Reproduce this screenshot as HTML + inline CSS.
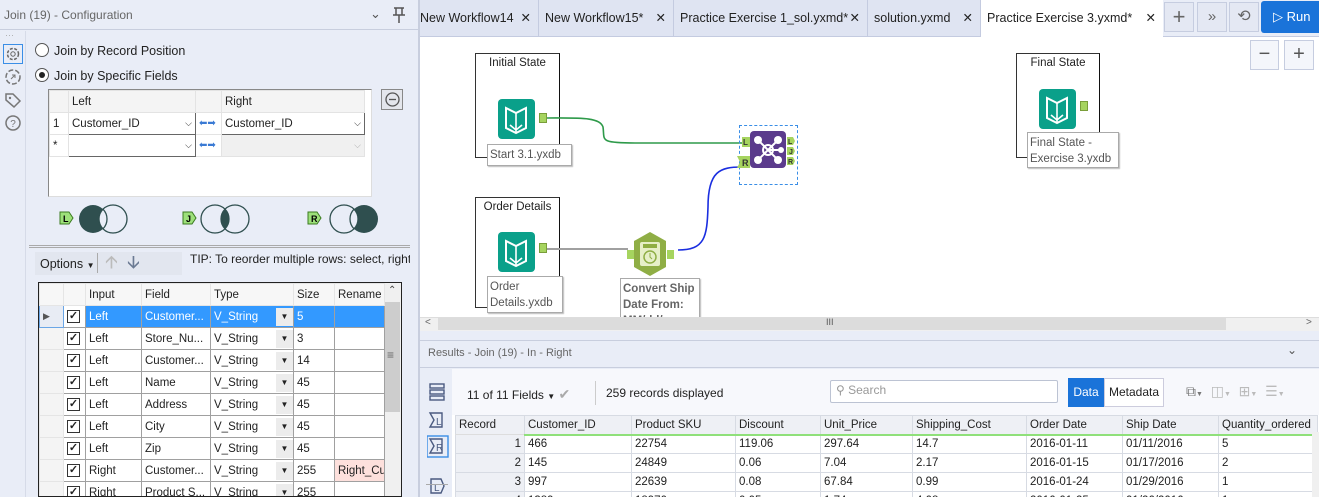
<!DOCTYPE html>
<html><head><meta charset="utf-8"><style>
*{box-sizing:border-box;margin:0;padding:0}
html{width:1319px;height:497px;overflow:hidden}
body{width:1319px;height:497px;overflow:hidden;position:relative;background:#e9edf7;font-family:"Liberation Sans",sans-serif;font-size:12px;color:#222}
.a{position:absolute}
.t{position:absolute;white-space:nowrap}
table{border-collapse:collapse;position:absolute;table-layout:fixed}
td{border:1px solid #a0a0a0;padding:0 3px;white-space:nowrap;overflow:hidden;height:22px;font-size:11.5px}
.rg td{height:19px;border:1px solid #d7dbe3;font-size:11.5px}
.ty{line-height:20px}
.dd{display:block;width:17px;height:18px;background:#ececec;float:right;text-align:center;font-size:8px;line-height:18px;margin-right:-3px;margin-top:1px}
.cb{display:inline-block;width:13px;height:13px;border:1px solid #333;background:#fff;font-size:11px;line-height:11px;text-align:center;font-weight:bold}
.tab{position:absolute;top:0;height:36px;background:#dfe4f2;border-right:1px solid #c4cbe0;font-size:12.5px;line-height:36px;padding-left:6px}
.tab b{position:absolute;right:7px;font-weight:normal}
.port{position:absolute;width:8px;height:10px;background:#a6d45f;border:1px solid #7a9e3a}
.lbl{position:absolute;border:1px solid #aaa;background:#fff;font-size:11.5px;color:#555;padding:2px;line-height:16px;box-shadow:1px 1px 1px #bbb}
.box{position:absolute;border:1px solid #333;border-right:1.5px solid #111;background:#fff;font-size:11.5px;text-align:center;padding-top:3px}
.book{position:absolute;width:37px;height:40px;background:#0aa08a;border-radius:4px}
</style></head><body>

<!-- LEFT PANEL -->
<div class="a" style="left:0;top:0;width:419px;height:30px;border-bottom:1px solid #c8cede;background:#e9edf7"></div>
<div class="t" style="left:4px;top:8px;font-size:12px;color:#666">Join (19) - Configuration</div>
<div class="t" style="left:370px;top:6px;font-size:13px;color:#555">&#8964;</div>
<svg class="a" style="left:391px;top:6px" width="16" height="18"><path d="M3 2h10M5 2v7M11 2v7M2 9h12M8 9v8" stroke="#555" stroke-width="1.5" fill="none"/></svg>
<div class="a" style="left:418px;top:0;width:2px;height:497px;background:#c8cede"></div>
<div class="a" style="left:25px;top:31px;width:1px;height:466px;background:#d6dbe8"></div>
<div class="t" style="left:5px;top:30px;color:#aaa;font-size:9px">···</div>
<div class="a" style="left:3px;top:44px;width:20px;height:20px;border:1px solid #3a8ee6"></div>
<svg class="a" style="left:4px;top:45px" width="18" height="18"><circle cx="9" cy="9" r="5.5" fill="none" stroke="#666" stroke-width="1.5" stroke-dasharray="3 1.5"/><circle cx="9" cy="9" r="2.2" fill="none" stroke="#666"/></svg>
<svg class="a" style="left:4px;top:68px" width="18" height="18"><circle cx="9" cy="9" r="7" fill="none" stroke="#777" stroke-width="1.5" stroke-dasharray="5 2"/><path d="M7 11l4-4M8 7h3v3" stroke="#777" fill="none"/></svg>
<svg class="a" style="left:4px;top:91px" width="18" height="18"><path d="M2 3v6l8 7 6-6-7-7z" fill="none" stroke="#777" stroke-width="1.5"/><circle cx="6" cy="7" r="1.2" fill="#777"/></svg>
<svg class="a" style="left:4px;top:114px" width="18" height="18"><circle cx="9" cy="9" r="7" fill="none" stroke="#777" stroke-width="1.5"/><text x="9" y="13" font-size="10" text-anchor="middle" fill="#777" font-family="Liberation Sans">?</text></svg>

<div class="a" style="left:35px;top:43px;width:14px;height:14px;border-radius:50%;border:1px solid #555;background:#fff"></div>
<div class="t" style="left:54px;top:44px;font-size:12.5px">Join by Record Position</div>
<div class="a" style="left:35px;top:68px;width:14px;height:14px;border-radius:50%;border:1px solid #555;background:#fff"></div>
<div class="a" style="left:39px;top:72px;width:6px;height:6px;border-radius:50%;background:#222"></div>
<div class="t" style="left:54px;top:69px;font-size:12.5px">Join by Specific Fields</div>

<div class="a" style="left:48px;top:89px;width:324px;height:108px;background:#fff;border:1px solid #888;border-right-color:#ddd;border-bottom-color:#ddd"></div>
<table style="left:49px;top:90px;width:315px">
<colgroup><col style="width:19px"><col style="width:127px"><col style="width:26px"><col style="width:143px"></colgroup>
<tr><td style="background:#f4f4f4;border-color:#e3e3e3"></td><td style="background:#f4f4f4;border-color:#e3e3e3;height:20px">Left</td><td style="background:#f4f4f4;border-color:#e3e3e3"></td><td style="background:#f4f4f4;border-color:#e3e3e3">Right</td></tr>
<tr><td style="border-color:#e3e3e3">1</td><td style="border-color:#666">Customer_ID<span style="float:right;font-size:9px">&#9013;</span></td><td style="border-color:#e3e3e3;color:#3a7ad4;font-size:10px">&#11013;&#10145;</td><td style="border-color:#666">Customer_ID<span style="float:right;font-size:9px">&#9013;</span></td></tr>
<tr><td style="border-color:#e3e3e3">*</td><td style="border-color:#666"><span style="float:right;font-size:9px">&#9013;</span></td><td style="border-color:#e3e3e3;color:#3a7ad4;font-size:10px">&#11013;&#10145;</td><td style="background:#f0f0f0;border-color:#e3e3e3"><span style="float:right;font-size:9px;color:#aaa">&#9013;</span></td></tr>
</table>
<div class="a" style="left:381px;top:89px;width:22px;height:21px;border:1px solid #888;background:#e4e6ec"></div>
<svg class="a" style="left:384px;top:91px" width="17" height="17"><circle cx="8.5" cy="8.5" r="6.5" fill="none" stroke="#555" stroke-width="1.3"/><path d="M5 8.5h7" stroke="#555" stroke-width="1.3"/></svg>

<svg class="a" style="left:55px;top:200px" width="340" height="38">
<g font-family="Liberation Sans" font-size="9" font-weight="bold">
<path d="M5 12h9l4 6-4 6H5z" fill="#9de07a" stroke="#3a7a20"/><text x="8" y="22">L</text>
<circle cx="38" cy="19" r="14" fill="#2f4f4f"/><circle cx="58" cy="19" r="14" fill="none" stroke="#2f4f4f" stroke-width="1.3"/>
<path d="M48 9.2a14 14 0 0 1 0 19.6a14 14 0 0 1 0-19.6z" fill="#e9edf7" stroke="#2f4f4f" stroke-width="1.3"/>
<path d="M128 12h9l4 6-4 6h-9z" fill="#9de07a" stroke="#3a7a20"/><text x="131" y="22">J</text>
<circle cx="160" cy="19" r="14" fill="none" stroke="#2f4f4f" stroke-width="1.3"/><circle cx="180" cy="19" r="14" fill="none" stroke="#2f4f4f" stroke-width="1.3"/>
<path d="M170 9.2a14 14 0 0 1 0 19.6a14 14 0 0 1 0-19.6z" fill="#2f4f4f"/>
<path d="M253 12h9l4 6-4 6h-9z" fill="#9de07a" stroke="#3a7a20"/><text x="256" y="22">R</text>
<circle cx="309" cy="19" r="14" fill="#2f4f4f"/><circle cx="289" cy="19" r="14" fill="none" stroke="#2f4f4f" stroke-width="1.3"/>
<path d="M299 9.2a14 14 0 0 1 0 19.6a14 14 0 0 1 0-19.6z" fill="#e9edf7" stroke="#2f4f4f" stroke-width="1.3"/>
</g></svg>

<div class="a" style="left:29px;top:245px;width:381px;height:1px;background:#aaa"></div>
<div class="a" style="left:29px;top:247px;width:381px;height:1px;background:#aaa"></div>
<div class="a" style="left:35px;top:252px;width:147px;height:23px;background:#e2e6ef"></div>
<div class="t" style="left:40px;top:257px;font-size:12.5px">Options <span style="font-size:8px">&#9660;</span></div>
<div class="a" style="left:97px;top:253px;width:1px;height:20px;background:#aaa"></div>
<div class="t" style="left:105px;top:250px;font-size:18px;color:#bbb">&#129129;</div>
<div class="t" style="left:127px;top:250px;font-size:18px;color:#6b7a93">&#129131;</div>
<div class="t" style="left:190px;top:252px;font-size:12px;width:220px;overflow:hidden">TIP: To reorder multiple rows: select, right-clicl</div>

<div class="a" style="left:38px;top:282px;width:364px;height:215px;border:1px solid #222;background:#fff;overflow:hidden">
<div class="a" style="left:345px;top:0;width:17px;height:214px;background:#f0f0f0"></div>
<div class="a" style="left:346px;top:19px;width:15px;height:110px;background:#cdcdcd"></div>
<div class="t" style="left:349px;top:2px;font-size:10px;color:#444">&#8963;</div>
<div class="t" style="left:348px;top:65px;font-size:12px;color:#666">&#8801;</div>
<table style="left:0;top:0;width:345px">
<colgroup><col style="width:24px"><col style="width:22px"><col style="width:56px"><col style="width:69px"><col style="width:83px"><col style="width:41px"><col style="width:50px"></colgroup>
<tr style="background:#f7f7f7"><td style="height:18px;border-color:#e5e5e5"></td><td style="border-color:#e5e5e5"></td><td style="border-color:#e5e5e5">Input</td><td style="border-color:#e5e5e5">Field</td><td style="border-color:#e5e5e5">Type</td><td style="border-color:#e5e5e5">Size</td><td style="border-color:#e5e5e5">Rename</td></tr>
<tr style="background:#3399ff;color:#fff"><td style="background:#e8ecf4;color:#555;border:1px solid #6aa6e6;font-size:9px">&#9654;</td><td style="background:#fff"><span class="cb" style="color:#222">&#10003;</span></td><td>Left</td><td>Customer...</td><td class="ty"><span class="dd" style="color:#222">&#9660;</span>V_String</td><td>5</td><td></td></tr>
<tr><td style="background:#f4f4f4;border-color:#e5e5e5"></td><td><span class="cb">&#10003;</span></td><td>Left</td><td>Store_Nu...</td><td class="ty"><span class="dd">&#9660;</span>V_String</td><td>3</td><td></td></tr>
<tr><td style="background:#f4f4f4;border-color:#e5e5e5"></td><td><span class="cb">&#10003;</span></td><td>Left</td><td>Customer...</td><td class="ty"><span class="dd">&#9660;</span>V_String</td><td>14</td><td></td></tr>
<tr><td style="background:#f4f4f4;border-color:#e5e5e5"></td><td><span class="cb">&#10003;</span></td><td>Left</td><td>Name</td><td class="ty"><span class="dd">&#9660;</span>V_String</td><td>45</td><td></td></tr>
<tr><td style="background:#f4f4f4;border-color:#e5e5e5"></td><td><span class="cb">&#10003;</span></td><td>Left</td><td>Address</td><td class="ty"><span class="dd">&#9660;</span>V_String</td><td>45</td><td></td></tr>
<tr><td style="background:#f4f4f4;border-color:#e5e5e5"></td><td><span class="cb">&#10003;</span></td><td>Left</td><td>City</td><td class="ty"><span class="dd">&#9660;</span>V_String</td><td>45</td><td></td></tr>
<tr><td style="background:#f4f4f4;border-color:#e5e5e5"></td><td><span class="cb">&#10003;</span></td><td>Left</td><td>Zip</td><td class="ty"><span class="dd">&#9660;</span>V_String</td><td>45</td><td></td></tr>
<tr><td style="background:#f4f4f4;border-color:#e5e5e5"></td><td><span class="cb">&#10003;</span></td><td>Right</td><td>Customer...</td><td class="ty"><span class="dd">&#9660;</span>V_String</td><td>255</td><td style="background:#fde0dc">Right_Cu</td></tr>
<tr><td style="background:#f4f4f4;border-color:#e5e5e5"></td><td><span class="cb">&#10003;</span></td><td>Right</td><td>Product S...</td><td class="ty"><span class="dd">&#9660;</span>V_String</td><td>255</td><td></td></tr>
</table>
</div>

<!-- TABS -->
<div class="a" style="left:420px;top:0;width:899px;height:37px;background:#e9edf7;border-bottom:1px solid #c4cbe0"></div>
<div class="tab" style="left:420px;width:119px;padding-left:0">New Workflow14<b>✕</b></div>
<div class="tab" style="left:539px;width:135px">New Workflow15*<b>✕</b></div>
<div class="tab" style="left:674px;width:194px">Practice Exercise 1_sol.yxmd*<b>✕</b></div>
<div class="tab" style="left:868px;width:113px">solution.yxmd<b>✕</b></div>
<div class="tab" style="left:981px;width:182px;background:#fff;height:37px;border:none">Practice Exercise 3.yxmd*<b>✕</b></div>
<div class="a" style="left:1164px;top:2px;width:30px;height:30px;border:1px solid #c6cde0;background:#e4e8f3;text-align:center;font-size:22px;line-height:28px;color:#666">+</div>
<div class="a" style="left:1197px;top:2px;width:30px;height:30px;border:1px solid #c6cde0;background:#e4e8f3;text-align:center;font-size:15px;line-height:28px;color:#666">»</div>
<div class="a" style="left:1229px;top:2px;width:30px;height:30px;border:1px solid #c6cde0;background:#e4e8f3;text-align:center;font-size:16px;line-height:28px;color:#666">&#10226;</div>
<div class="a" style="left:1261px;top:1px;width:58px;height:32px;background:#1a73d9;border-radius:3px 0 0 3px;color:#fff;font-size:13px;line-height:32px;padding-left:12px">&#9655; Run</div>

<!-- CANVAS -->
<div class="a" style="left:420px;top:37px;width:899px;height:280px;background:#fff"></div>
<div class="a" style="left:1250px;top:40px;width:29px;height:30px;border:1px solid #c6cde0;background:#f4f6fb;text-align:center;font-size:20px;line-height:27px;color:#555">−</div>
<div class="a" style="left:1284px;top:40px;width:30px;height:30px;border:1px solid #c6cde0;background:#f4f6fb;text-align:center;font-size:20px;line-height:27px;color:#555">+</div>

<div class="box" style="left:475px;top:53px;width:85px;height:105px">Initial State</div>
<div class="box" style="left:475px;top:197px;width:85px;height:111px">Order Details</div>
<div class="box" style="left:1016px;top:53px;width:84px;height:105px">Final State</div>

<svg class="a" style="left:420px;top:37px" width="899" height="280">
<path d="M127 81 C160 81 180 80 183 90 C185 103 178 106 215 106 L322 106" stroke="#2e9a4a" stroke-width="1.6" fill="none"/>
<path d="M127 212 L208 212" stroke="#a0a0a0" stroke-width="2" fill="none"/>
<path d="M258 213 C285 213 287 200 288 170 C288 134 300 130 322 130" stroke="#1a2ee0" stroke-width="1.6" fill="none"/>
</svg>

<div class="book" style="left:498px;top:99px"></div>
<svg class="a" style="left:498px;top:99px" width="37" height="40"><path d="M8 9v20l10 5 10-5V9l-10 5z" fill="none" stroke="#fff" stroke-width="2"/><path d="M18 14v20M12 26l6 5 6-5" stroke="#fff" stroke-width="1.6" fill="none"/></svg>
<div class="port" style="left:539px;top:113px"></div>
<div class="lbl" style="left:487px;top:144px;width:85px">Start 3.1.yxdb</div>

<div class="book" style="left:498px;top:232px"></div>
<svg class="a" style="left:498px;top:232px" width="37" height="40"><path d="M8 9v20l10 5 10-5V9l-10 5z" fill="none" stroke="#fff" stroke-width="2"/><path d="M18 14v20M12 26l6 5 6-5" stroke="#fff" stroke-width="1.6" fill="none"/></svg>
<div class="port" style="left:539px;top:243px"></div>
<div class="lbl" style="left:487px;top:276px;width:76px;height:37px">Order<br>Details.yxdb</div>

<div class="book" style="left:1039px;top:89px"></div>
<svg class="a" style="left:1039px;top:89px" width="37" height="40"><path d="M8 9v20l10 5 10-5V9l-10 5z" fill="none" stroke="#fff" stroke-width="2"/><path d="M18 14v20M12 26l6 5 6-5" stroke="#fff" stroke-width="1.6" fill="none"/></svg>
<div class="port" style="left:1080px;top:101px"></div>
<div class="lbl" style="left:1027px;top:132px;width:92px;height:36px">Final State -<br>Exercise 3.yxdb</div>

<!-- convert tool -->
<svg class="a" style="left:620px;top:230px" width="60" height="48"><path d="M30 2l16 9v26l-16 9-16-9V11z" fill="#8fae45"/><rect x="20" y="12" width="20" height="24" rx="2" fill="#e6efc8"/><rect x="23" y="14" width="14" height="4" fill="#8fae45"/><circle cx="30" cy="27" r="6" fill="none" stroke="#8fae45" stroke-width="1.5"/><path d="M30 23v4l2 2" stroke="#8fae45" fill="none"/><rect x="7" y="20" width="7" height="9" fill="#a6d45f"/><rect x="47" y="20" width="7" height="9" fill="#a6d45f"/></svg>
<div class="lbl" style="left:620px;top:278px;width:80px;height:40px;overflow:hidden;font-weight:bold;color:#666">Convert Ship<br>Date From:<br>MM/dd/yyyy</div>

<!-- join tool -->
<div class="a" style="left:739px;top:125px;width:59px;height:60px;border:1px dashed #3a8ee6"></div>
<svg class="a" style="left:733px;top:128px" width="70" height="56">
<g font-family="Liberation Sans" font-weight="bold" font-size="8" fill="#333">
<rect x="17" y="3" width="36" height="37" rx="4" fill="#5b3b8c"/>
<circle cx="35" cy="22" r="5" fill="none" stroke="#fff" stroke-width="2"/>
<g stroke="#fff" stroke-width="2"><path d="M35 22L25 12M35 22L45 12M35 22L25 32M35 22L45 32M35 22H48"/></g>
<g fill="#fff"><circle cx="25" cy="12" r="4"/><circle cx="45" cy="12" r="4"/><circle cx="25" cy="32" r="4"/><circle cx="45" cy="32" r="4"/><circle cx="48" cy="22" r="3"/></g>
<path d="M9 9h8v10H9z" fill="#a6d45f"/><text x="10" y="17">L</text>
<path d="M4 28h13v12H4l3-6z" fill="#a6d45f"/><text x="9" y="38" font-size="9">R</text>
<path d="M54 9h6l2 4-2 4h-6z" fill="#a6d45f"/><text x="55" y="16" font-size="7">L</text>
<path d="M54 19h6l2 4-2 4h-6z" fill="#a6d45f"/><text x="56" y="26" font-size="7">J</text>
<path d="M54 29h6l2 4-2 4h-6z" fill="#a6d45f"/><text x="55" y="36" font-size="7">R</text>
</g></svg>

<!-- scrollbar -->
<div class="a" style="left:420px;top:317px;width:899px;height:14px;background:#f0f0f0;border-top:1px solid #ddd"></div>
<div class="a" style="left:438px;top:318px;width:788px;height:12px;background:#dcdcdc"></div>
<div class="t" style="left:425px;top:317px;font-size:10px;color:#666">&lt;</div>
<div class="t" style="left:826px;top:317px;font-size:9px;color:#555">III</div>
<div class="t" style="left:1306px;top:317px;font-size:10px;color:#666">&gt;</div>
<div class="a" style="left:420px;top:331px;width:899px;height:10px;background:#e9edf7"></div>

<!-- RESULTS -->
<div class="a" style="left:420px;top:340px;width:899px;height:28px;background:#e9edf7;border-top:1px solid #c8cede;border-bottom:1px solid #c8cede"></div>
<div class="t" style="left:428px;top:347px;font-size:11px;color:#666">Results - Join (19) - In - Right</div>
<div class="t" style="left:1287px;top:343px;font-size:12px;color:#555">&#8964;</div>
<div class="a" style="left:452px;top:369px;width:867px;height:128px;background:#fff"></div>
<div class="a" style="left:452px;top:369px;width:867px;height:46px;background:#f7f8fc"></div>
<svg class="a" style="left:427px;top:382px" width="22" height="115">
<g fill="none" stroke="#4a5a80" stroke-width="1.4">
<rect x="3" y="2" width="14" height="4"/><rect x="3" y="8" width="14" height="4"/><rect x="3" y="14" width="14" height="4"/>
<path d="M3 31h12v14H3l4-7z"/><text x="9" y="43" font-size="10" fill="#4a5a80" stroke="none" font-family="Liberation Sans">L</text>
<rect x="0" y="54" width="21" height="21" stroke="#3a8ee6"/>
<path d="M3 57h12v14H3l4-7z"/><text x="9" y="69" font-size="10" fill="#4a5a80" stroke="none" font-family="Liberation Sans">R</text>
<path d="M4 97h10l3 7-3 7H4z"/><text x="7" y="109" font-size="10" fill="#4a5a80" stroke="none" font-family="Liberation Sans">L</text>
</g></svg>
<div class="a" style="left:426px;top:484px;width:22px;height:1px;background:#aaa"></div>
<div class="t" style="left:467px;top:386px;font-size:12px">11 of 11 Fields <span style="font-size:8px">&#9660;</span> <span style="color:#aaa;font-size:14px">&#10004;</span></div>
<div class="a" style="left:595px;top:381px;width:1px;height:24px;background:#ccc"></div>
<div class="t" style="left:606px;top:386px;font-size:12px">259 records displayed</div>
<div class="a" style="left:830px;top:380px;width:228px;height:23px;border:1px solid #bcc3d3;border-radius:2px;background:#fff"></div>
<div class="t" style="left:836px;top:383px;font-size:12px;color:#999">&#9906; Search</div>
<div class="a" style="left:1068px;top:378px;width:36px;height:29px;background:#1a73d9;color:#fff;font-size:12px;line-height:29px;text-align:center">Data</div>
<div class="a" style="left:1104px;top:378px;width:60px;height:29px;background:#fff;border:1px solid #ccd;font-size:12px;line-height:27px;text-align:center">Metadata</div>
<div class="t" style="left:1186px;top:383px;font-size:14px;color:#777">&#10697;<span style="font-size:7px">&#9660;</span> &nbsp;<span style="color:#bbb">&#9707;<span style="font-size:7px">&#9660;</span> &nbsp;&#8862;<span style="font-size:7px">&#9660;</span> &nbsp;&#9776;<span style="font-size:7px">&#9660;</span></span></div>

<table class="rg" style="left:455px;top:415px;width:862px">
<colgroup><col style="width:69px"><col style="width:107px"><col style="width:104px"><col style="width:85px"><col style="width:92px"><col style="width:114px"><col style="width:96px"><col style="width:96px"><col style="width:99px"></colgroup>
<tr style="background:#eef0f5"><td style="border-bottom:1px solid #ddd;height:17px">Record</td><td style="border-bottom:2px solid #8fe07a">Customer_ID</td><td style="border-bottom:2px solid #8fe07a">Product SKU</td><td style="border-bottom:2px solid #8fe07a">Discount</td><td style="border-bottom:2px solid #8fe07a">Unit_Price</td><td style="border-bottom:2px solid #8fe07a">Shipping_Cost</td><td style="border-bottom:2px solid #8fe07a">Order Date</td><td style="border-bottom:2px solid #8fe07a">Ship Date</td><td style="border-bottom:2px solid #8fe07a">Quantity_ordered</td></tr>
<tr><td style="text-align:right;background:#eef0f5">1</td><td>466</td><td>22754</td><td>119.06</td><td>297.64</td><td>14.7</td><td>2016-01-11</td><td>01/11/2016</td><td>5</td></tr>
<tr><td style="text-align:right;background:#eef0f5">2</td><td>145</td><td>24849</td><td>0.06</td><td>7.04</td><td>2.17</td><td>2016-01-15</td><td>01/17/2016</td><td>2</td></tr>
<tr><td style="text-align:right;background:#eef0f5">3</td><td>997</td><td>22639</td><td>0.08</td><td>67.84</td><td>0.99</td><td>2016-01-24</td><td>01/29/2016</td><td>1</td></tr>
<tr><td style="text-align:right;background:#eef0f5">4</td><td>1389</td><td>18970</td><td>0.05</td><td>1.74</td><td>4.08</td><td>2016-01-25</td><td>01/26/2016</td><td>1</td></tr>
</table>
<div class="a" style="left:1312px;top:432px;width:7px;height:65px;background:#f0f0f0"></div>
</body></html>
